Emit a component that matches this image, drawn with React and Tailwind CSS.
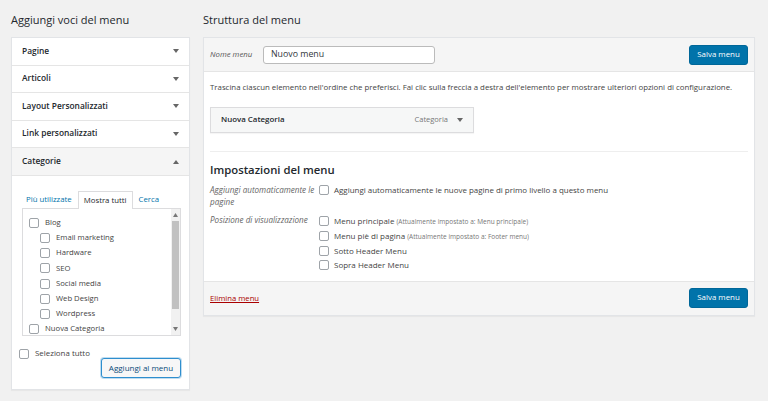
import React from "react";

const Caret = ({ up }) => (
  <svg width="6" height="4" viewBox="0 0 6 4" className="shrink-0">
    {up ? <path d="M0 4 L3 0 L6 4 Z" fill="#666" /> : <path d="M0 0 L6 0 L3 4 Z" fill="#666" />}
  </svg>
);

const Box = ({ className = "" }) => (
  <span className={"inline-block w-[10px] h-[10px] rounded-[2px] border border-[#9ea3a8] bg-white shrink-0 " + className} />
);

const Section = ({ label }) => (
  <div className="h-[27.5px] flex items-center justify-between pl-[10px] pr-[10px] border-b border-[#e5e5e5] bg-white">
    <span className="text-[8.4px] font-semibold text-[#23282d]">{label}</span>
    <Caret />
  </div>
);

const cats = [
  { t: "Blog", c: false },
  { t: "Email marketing", c: true },
  { t: "Hardware", c: true },
  { t: "SEO", c: true },
  { t: "Social media", c: true },
  { t: "Web Design", c: true },
  { t: "Wordpress", c: true },
  { t: "Nuova Categoria", c: false },
];

export default function App() {
  return (
    <div
      className="w-[768px] h-[401px] bg-[#f1f1f1] flex gap-[13px] pl-[11px] overflow-hidden text-[#444]"
      style={{ fontFamily: '"Open Sans", "Noto Sans", sans-serif' }}
    >
      {/* Left column */}
      <div className="w-[179px] flex flex-col">
        <div className="h-[37px] flex items-center text-[11px] text-[#23282d] pt-[3px]">Aggiungi voci del menu</div>
        <div className="border border-[#e2e4e7] bg-white shadow-[0_1px_1px_rgba(0,0,0,0.04)]">
          <Section label="Pagine" />
          <Section label="Articoli" />
          <Section label="Layout Personalizzati" />
          <Section label="Link personalizzati" />
          <div className="h-[28px] flex items-center justify-between pl-[10px] pr-[10px] border-b border-[#e5e5e5] bg-[#f5f5f5]">
            <span className="text-[8.4px] font-semibold text-[#23282d]">Categorie</span>
            <Caret up />
          </div>
          <div className="pt-[14px] pl-[10px] pr-[8px] pb-[11px]">
            <div className="flex items-end text-[7.8px] pl-[4px]">
              <span className="text-[#0073aa] pr-[6px] pb-[2px]">Più utilizzate</span>
              <span className="px-[5px] pt-[3px] pb-[2px] border border-b-0 border-[#dcdcde] text-[#23282d] bg-white relative top-[1px]">Mostra tutti</span>
              <span className="text-[#0073aa] pl-[6px] pb-[2px]">Cerca</span>
            </div>
            <div className="h-[128px] border border-[#dcdcde] flex bg-white">
              <div className="flex-1 overflow-hidden pl-[6px] pt-[6.5px]">
                {cats.map((c) => (
                  <div key={c.t} className={"flex items-center h-[15.2px] gap-[6px] " + (c.c ? "pl-[11px]" : "")}>
                    <Box />
                    <span className="text-[7.7px] text-[#444] whitespace-nowrap">{c.t}</span>
                  </div>
                ))}
              </div>
              <div className="w-[9px] bg-[#f1f1f1] flex flex-col items-center py-[2px]">
                <svg width="5" height="4" viewBox="0 0 5 4" className="mt-[2px]"><path d="M0 4 L2.5 0 L5 4Z" fill="#777" /></svg>
                <div className="w-[7px] h-[88px] bg-[#c1c1c1] mt-[4px]" />
                <div className="flex-1" />
                <svg width="5" height="4" viewBox="0 0 5 4" className="mb-[2px]"><path d="M0 0 L5 0 L2.5 4Z" fill="#777" /></svg>
              </div>
            </div>
            <div className="flex items-center gap-[6px] -ml-[3px] mt-[12px]">
              <Box />
              <span className="text-[7.9px] text-[#444]">Seleziona tutto</span>
            </div>
            <div className="flex justify-end -mt-[2px]">
              <button className="w-[80px] h-[20px] border border-[#2e8ece] rounded-[3px] bg-[#f7f7f7] text-[8px] text-[#0a4b78] shadow-[0_0_0_1px_rgba(46,142,206,0.3)]">
                Aggiungi al menu
              </button>
            </div>
          </div>
        </div>
      </div>

      {/* Right column */}
      <div className="w-[552px] flex flex-col">
        <div className="h-[37px] flex items-center text-[11px] text-[#23282d] pt-[3px]">Struttura del menu</div>
        <div className="border border-[#e2e4e7] bg-white shadow-[0_1px_1px_rgba(0,0,0,0.04)]">
          <div className="h-[34px] bg-[#f5f5f5] border-b border-[#e5e5e5] flex items-center pl-[6px] pr-[6px]">
            <span className="italic text-[7.8px] text-[#555] w-[53px]">Nome menu</span>
            <div className="w-[172px] h-[18px] border border-[#bbb] rounded-[3px] bg-white flex items-center pl-[7px] text-[8.8px] text-[#32373c]">
              Nuovo menu
            </div>
            <div className="flex-1" />
            <button className="w-[59px] h-[20px] rounded-[3px] bg-[#0073aa] text-white text-[7.9px] border border-[#006799]">Salva menu</button>
          </div>
          <div className="px-[6px] pt-[10px] pb-[8px]">
            <div className="text-[7.85px] text-[#444] whitespace-nowrap">
              Trascina ciascun elemento nell'ordine che preferisci. Fai clic sulla freccia a destra dell'elemento per mostrare ulteriori opzioni di configurazione.
            </div>
            <div className="mt-[13px] w-[264px] h-[26px] border border-[#dcdcde] bg-[#f6f7f7] flex items-center pl-[10px] pr-[10px] shadow-[0_1px_1px_rgba(0,0,0,0.04)]">
              <span className="text-[7.9px] font-semibold text-[#23282d] flex-1">Nuova Categoria</span>
              <span className="text-[7.5px] text-[#777] mr-[9px]">Categoria</span>
              <Caret />
            </div>
            <div className="mt-[18px] border-t border-[#eee]" />
            <div className="mt-[10px] text-[11.3px] font-semibold text-[#23282d]">Impostazioni del menu</div>
            <div className="flex mt-[5px]">
              <div className="w-[109px] italic text-[8.1px] text-[#666] leading-[12px]">Aggiungi automaticamente le pagine</div>
              <div className="flex items-start gap-[5px] pt-[1px]">
                <Box />
                <span className="text-[7.95px] text-[#444] leading-[11px]">Aggiungi automaticamente le nuove pagine di primo livello a questo menu</span>
              </div>
            </div>
            <div className="flex mt-[6px]">
              <div className="w-[109px] italic text-[8.1px] text-[#666] leading-[12px]">Posizione di visualizzazione</div>
              <div className="flex flex-col">
                {[
                  ["Menu principale", "(Attualmente impostato a: Menu principale)"],
                  ["Menu piè di pagina", "(Attualmente impostato a: Footer menu)"],
                  ["Sotto Header Menu", ""],
                  ["Sopra Header Menu", ""],
                ].map(([a, b]) => (
                  <div key={a} className="flex items-center gap-[5px] h-[14.8px]">
                    <Box />
                    <span className="text-[8px] text-[#444] whitespace-nowrap">
                      {a} {b && <span className="text-[6.5px] text-[#777]">{b}</span>}
                    </span>
                  </div>
                ))}
              </div>
            </div>
          </div>
          <div className="h-[34px] bg-[#f5f5f5] border-t border-[#e5e5e5] flex items-center pl-[6px] pr-[6px]">
            <span className="text-[7.7px] text-[#a00] underline">Elimina menu</span>
            <div className="flex-1" />
            <button className="w-[59px] h-[20px] rounded-[3px] bg-[#0073aa] text-white text-[7.9px] border border-[#006799]">Salva menu</button>
          </div>
        </div>
      </div>
    </div>
  );
}
